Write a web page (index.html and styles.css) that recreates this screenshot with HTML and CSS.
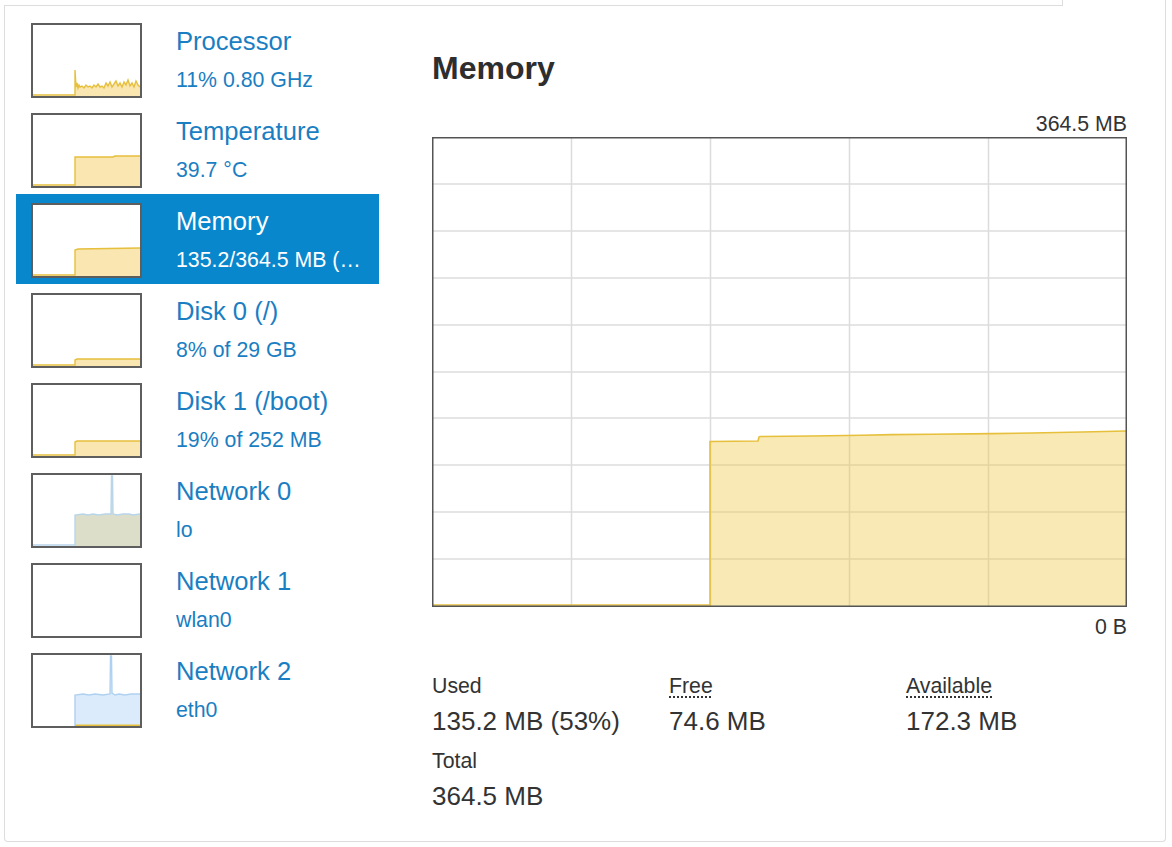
FILE: index.html
```html
<!DOCTYPE html>
<html lang="en">
<head>
<meta charset="utf-8">
<title>Memory</title>
<link rel="stylesheet" href="styles.css">
</head>
<body>
<div class="tabs">
  <div class="tabs-line"></div>
  <div class="tab-active"></div>
</div>
<div class="card">
  <ul class="sidebar">
    <li class="item">
      <div class="thumb">
        <svg viewBox="0 0 107 71" width="107" height="71">
          <path class="y-fill" d="M42,71 L42,45 43,62 44,58 45,63 46,60 47,62 49,61 51,63 53,60 55,62 57,61 59,63 61,60 63,62 65,59 67,62 69,61 71,63 73,58 75,61 77,57 79,62 81,59 83,56 85,61 87,58 89,62 91,57 93,60 95,55 97,61 99,58 101,62 103,56 105,60 107,62 L107,71 Z"/>
          <polyline class="y-line" points="0,70 42,70 42,45 43,62 44,58 45,63 46,60 47,62 49,61 51,63 53,60 55,62 57,61 59,63 61,60 63,62 65,59 67,62 69,61 71,63 73,58 75,61 77,57 79,62 81,59 83,56 85,61 87,58 89,62 91,57 93,60 95,55 97,61 99,58 101,62 103,56 105,60 107,62"/>
        </svg>
      </div>
      <div class="info">
        <div class="title">Processor</div>
        <div class="sub">11% 0.80 GHz</div>
      </div>
    </li>
    <li class="item">
      <div class="thumb">
        <svg viewBox="0 0 107 71" width="107" height="71">
          <path class="y-fill" d="M42,71 L42,42 80,42 82,41 107,41 L107,71 Z"/>
          <polyline class="y-line" points="0,70 42,70 42,42 80,42 82,41 107,41"/>
        </svg>
      </div>
      <div class="info">
        <div class="title">Temperature</div>
        <div class="sub">39.7 °C</div>
      </div>
    </li>
    <li class="item selected">
      <div class="thumb">
        <svg viewBox="0 0 107 71" width="107" height="71">
          <path class="y-fill" d="M42,71 L42,45 45,44 107,43 L107,71 Z"/>
          <polyline class="y-line" points="0,70 42,70 42,45 45,44 107,43"/>
        </svg>
      </div>
      <div class="info">
        <div class="title">Memory</div>
        <div class="sub">135.2/364.5 MB (37%)</div>
      </div>
    </li>
    <li class="item">
      <div class="thumb">
        <svg viewBox="0 0 107 71" width="107" height="71">
          <path class="y-fill" d="M42,71 L42,65 44,64 107,64 L107,71 Z"/>
          <polyline class="y-line" points="0,70 42,70 42,65 44,64 107,64"/>
        </svg>
      </div>
      <div class="info">
        <div class="title">Disk 0 (/)</div>
        <div class="sub">8% of 29 GB</div>
      </div>
    </li>
    <li class="item">
      <div class="thumb">
        <svg viewBox="0 0 107 71" width="107" height="71">
          <path class="y-fill" d="M42,71 L42,57 44,56 107,56 L107,71 Z"/>
          <polyline class="y-line" points="0,70 42,70 42,57 44,56 107,56"/>
        </svg>
      </div>
      <div class="info">
        <div class="title">Disk 1 (/boot)</div>
        <div class="sub">19% of 252 MB</div>
      </div>
    </li>
    <li class="item">
      <div class="thumb">
        <svg viewBox="0 0 107 71" width="107" height="71">
          <path class="g-fill" d="M42,71 L42,40 50,39 55,40 60,39 66,40 72,39 78,39 78.5,1 79.5,1 80,39 84,40 90,39 96,39 100,40 107,39 L107,71 Z"/>
          <polyline class="b-line" points="0,70 42,70 42,40 50,39 55,40 60,39 66,40 72,39 78,39 78.5,1 79.5,1 80,39 84,40 90,39 96,39 100,40 107,39"/>
        </svg>
      </div>
      <div class="info">
        <div class="title">Network 0</div>
        <div class="sub">lo</div>
      </div>
    </li>
    <li class="item">
      <div class="thumb">
        <svg viewBox="0 0 107 71" width="107" height="71"></svg>
      </div>
      <div class="info">
        <div class="title">Network 1</div>
        <div class="sub">wlan0</div>
      </div>
    </li>
    <li class="item">
      <div class="thumb">
        <svg viewBox="0 0 107 71" width="107" height="71">
          <path class="b-fill" d="M42,71 L42,40 50,39 56,40 62,39 70,40 77,39 77.5,1 78.5,1 79,38 82,40 86,39 92,40 98,39 107,39 L107,71 Z"/>
          <polyline class="b-line2" points="42,71 42,40 50,39 56,40 62,39 70,40 77,39 77.5,1 78.5,1 79,38 82,40 86,39 92,40 98,39 107,39"/>
          <line class="y-line" x1="42" y1="70.2" x2="107" y2="70.2"/>
        </svg>
      </div>
      <div class="info">
        <div class="title">Network 2</div>
        <div class="sub">eth0</div>
      </div>
    </li>
  </ul>

  <main class="main">
    <h1 class="heading">Memory</h1>
    <div class="axis-label">364.5 MB</div>
    <svg class="chart" viewBox="0 0 695 470" width="695" height="470">
      <g class="grid">
        <line x1="139.5" y1="0" x2="139.5" y2="470"/>
        <line x1="278.5" y1="0" x2="278.5" y2="470"/>
        <line x1="417.5" y1="0" x2="417.5" y2="470"/>
        <line x1="556.5" y1="0" x2="556.5" y2="470"/>
        <line x1="0" y1="47" x2="695" y2="47"/>
        <line x1="0" y1="94" x2="695" y2="94"/>
        <line x1="0" y1="141" x2="695" y2="141"/>
        <line x1="0" y1="188" x2="695" y2="188"/>
        <line x1="0" y1="235" x2="695" y2="235"/>
        <line x1="0" y1="281" x2="695" y2="281"/>
        <line x1="0" y1="328" x2="695" y2="328"/>
        <line x1="0" y1="375" x2="695" y2="375"/>
        <line x1="0" y1="422" x2="695" y2="422"/>
      </g>
      <path class="c-fill" d="M278,469 L278,304.5 326,304 327,300 328,299.5 380,299 430,298.3 460,297.6 500,297.2 560,296.6 600,296 650,295 694,294 L694,469 Z"/>
      <polyline class="c-line" points="1,468 278,468 278,304.5 326,304 327,300 328,299.5 380,299 430,298.3 460,297.6 500,297.2 560,296.6 600,296 650,295 694,294"/>
      <rect class="frame" x="0.75" y="0.75" width="693.5" height="468.5"/>
    </svg>
    <div class="axis-label bottom">0 B</div>

    <dl class="stats">
      <div class="stat">
        <dt class="label">Used</dt>
        <dd class="value">135.2 MB (53%)</dd>
      </div>
      <div class="stat">
        <dt class="label"><abbr title="Memory not in use">Free</abbr></dt>
        <dd class="value">74.6 MB</dd>
      </div>
      <div class="stat">
        <dt class="label"><abbr title="Memory available for new applications">Available</abbr></dt>
        <dd class="value">172.3 MB</dd>
      </div>
      <div class="stat">
        <dt class="label">Total</dt>
        <dd class="value">364.5 MB</dd>
      </div>
    </dl>
  </main>
</div>
</body>
</html>
```

FILE: styles.css
```css
* { box-sizing: border-box; }

html, body {
  margin: 0;
  background: #fff;
}

body {
  padding: 0 6px 0 4px;
  font-family: "Liberation Sans", Arial, sans-serif;
  color: #333;
}

.tabs {
  display: flex;
  height: 6px;
}

.tabs-line {
  flex: 1;
  border-bottom: 1px solid #ddd;
}

.tab-active {
  width: 104px;
  border-left: 1px solid #ddd;
  border-right: 1px solid #ddd;
}

.card {
  display: flex;
  align-items: flex-start;
  border: 1px solid #ddd;
  border-top: none;
  border-radius: 0 0 4px 4px;
  padding: 8px 38px 29px 11px;
}

.sidebar {
  list-style: none;
  margin: 0;
  padding: 0;
  width: 363px;
  flex: none;
}

.item {
  display: flex;
  align-items: flex-start;
  height: 90px;
  padding: 9px 12px 0 15px;
}

.item.selected {
  background: #0987cd;
}

.thumb {
  width: 111px;
  height: 75px;
  border: 2px solid #5e5e5e;
  background: #fff;
  flex: none;
}

.thumb svg {
  display: block;
}

.y-fill { fill: #f9e6b0; stroke: none; }
.y-line { fill: none; stroke: #e6bf3d; stroke-width: 1.4; }
.g-fill { fill: #dcdec9; stroke: none; }
.b-fill { fill: #dcebfb; stroke: none; }
.b-line { fill: none; stroke: #b8d5ea; stroke-width: 1.4; }
.b-line2 { fill: none; stroke: #afd1f1; stroke-width: 1.4; }

.info {
  margin-left: 34px;
  min-width: 0;
  flex: 1;
  padding-top: 3px;
  color: #1a7ec2;
}

.selected .info {
  color: #fff;
}

.title {
  font-size: 25.6px;
  line-height: 30px;
  white-space: nowrap;
}

.sub {
  margin-top: 12px;
  font-size: 21.3px;
  line-height: 25px;
  white-space: nowrap;
  overflow: hidden;
  text-overflow: ellipsis;
}

.main {
  margin-left: 53px;
  width: 695px;
  flex: none;
}

.heading {
  margin: 36px 0 0;
  font-size: 32px;
  line-height: 37px;
  font-weight: bold;
  color: #2e2e2e;
}

.axis-label {
  margin-top: 25px;
  font-size: 21.3px;
  line-height: 25px;
  text-align: right;
  color: #333;
}

.axis-label.bottom {
  margin-top: 8px;
}

.chart {
  display: block;
}

.grid line {
  stroke: #dcdcdc;
  stroke-width: 1.5;
}

.c-fill {
  fill: rgba(240, 200, 70, 0.4);
}

.c-line {
  fill: none;
  stroke: #e6c03c;
  stroke-width: 1.6;
}

.frame {
  fill: none;
  stroke: #545454;
  stroke-width: 1.5;
}

.stats {
  display: grid;
  grid-template-columns: repeat(3, 237px);
  row-gap: 12px;
  margin: 34px 0 0;
}

.label {
  font-size: 21.3px;
  line-height: 25px;
  color: #333;
}

.label abbr {
  text-decoration: underline dotted;
  text-underline-offset: 3px;
  cursor: help;
}

.value {
  margin: 6px 0 0;
  font-size: 26px;
  line-height: 32px;
  color: #333;
}
```
